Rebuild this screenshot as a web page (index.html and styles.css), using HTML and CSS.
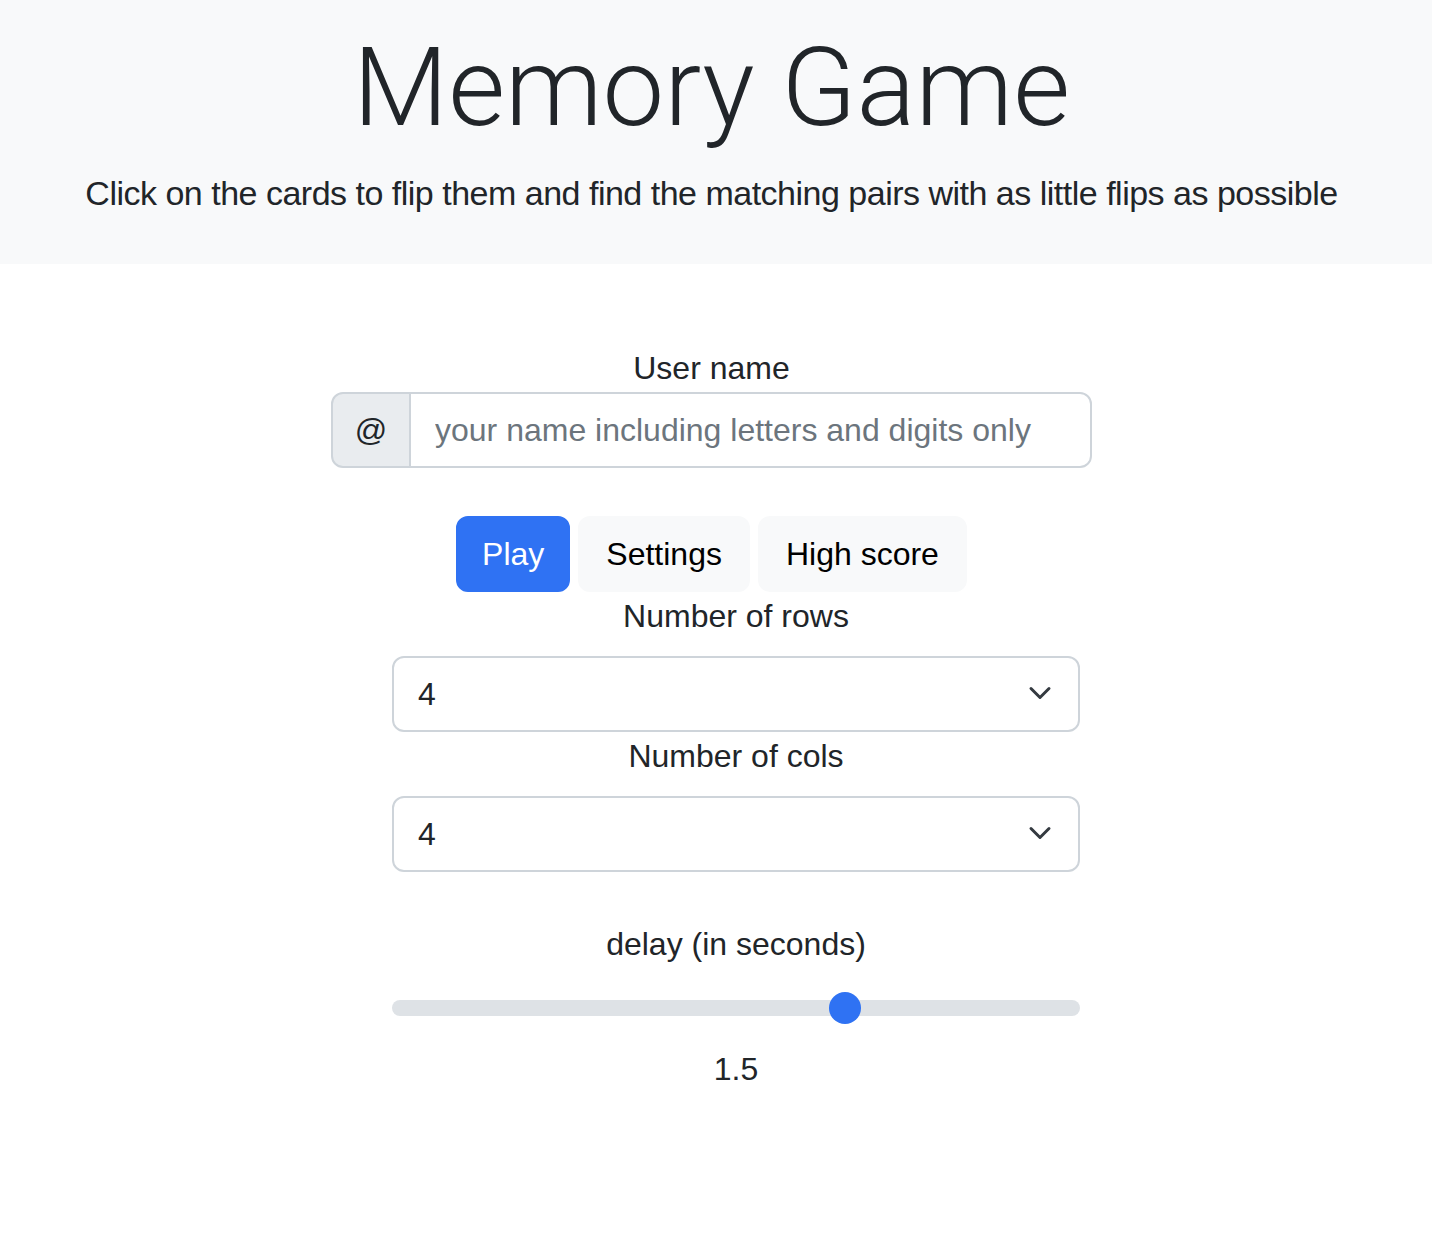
FILE: index.html
```html
<!DOCTYPE html>
<html lang="en">
<head>
<meta charset="utf-8">
<title>Memory Game</title>
<link rel="stylesheet" href="styles.css">
</head>
<body>
<header class="hero">
  <h1 class="hero-title">Memory Game</h1>
  <p class="hero-lead">Click on the cards to flip them and find the matching pairs with as little flips as possible</p>
</header>
<main class="main">
  <label class="field-label" for="username">User name</label>
  <div class="input-group">
    <span class="input-addon">@</span>
    <input id="username" class="text-input" type="text" placeholder="your name including letters and digits only">
  </div>
  <nav class="tabs">
    <button class="btn btn-primary" type="button">Play</button>
    <button class="btn btn-light" type="button">Settings</button>
    <button class="btn btn-light" type="button">High score</button>
  </nav>
  <section class="settings">
    <label class="field-label field-label-gap" for="rows">Number of rows</label>
    <div class="select-wrap">
      <select id="rows" class="select">
        <option>2</option>
        <option selected>4</option>
        <option>6</option>
      </select>
      <svg class="chevron" viewBox="0 0 16 16" aria-hidden="true"><path d="m2 5 6 6 6-6" fill="none" stroke="#343a40" stroke-width="2" stroke-linecap="round" stroke-linejoin="round"/></svg>
    </div>
    <label class="field-label field-label-gap" for="cols">Number of cols</label>
    <div class="select-wrap">
      <select id="cols" class="select">
        <option>2</option>
        <option selected>4</option>
        <option>6</option>
      </select>
      <svg class="chevron" viewBox="0 0 16 16" aria-hidden="true"><path d="m2 5 6 6 6-6" fill="none" stroke="#343a40" stroke-width="2" stroke-linecap="round" stroke-linejoin="round"/></svg>
    </div>
    <label class="field-label field-label-gap delay-label" for="delay">delay (in seconds)</label>
    <input id="delay" class="range" type="range" min="0.5" max="2" step="0.1" value="1.5">
    <p class="range-value">1.5</p>
  </section>
</main>
</body>
</html>
```
FILE: styles.css
```css
* { box-sizing: border-box; }
html, body { margin: 0; padding: 0; }
body {
  font-family: "Liberation Sans", Arial, sans-serif;
  font-size: 32px;
  line-height: 1.5;
  color: #212529;
  background: #fff;
}
.hero {
  background: #f8f9fa;
  height: 264px;
  padding: 22px 9px 0 0;
  text-align: center;
}
.hero-title {
  margin: 0;
  font-family: Roboto, "Liberation Sans", sans-serif;
  font-weight: 300;
  font-size: 110px;
  line-height: 1.2;
  color: #212529;
}
.hero-lead {
  margin: 14px 0 0;
  font-size: 34px;
  letter-spacing: -0.5px;
  line-height: 1.5;
  white-space: nowrap;
}
.main {
  display: flex;
  flex-direction: column;
  align-items: center;
  padding: 80px 9px 0 0;
}
.field-label {
  display: block;
  text-align: center;
  line-height: 48px;
}
.input-group {
  display: flex;
  width: 761px;
  height: 76px;
}
.input-addon {
  display: flex;
  align-items: center;
  justify-content: center;
  width: 80px;
  flex: none;
  background: #e9ecef;
  border: 2px solid #ced4da;
  border-radius: 12px 0 0 12px;
}
.text-input {
  flex: 1;
  min-width: 0;
  margin: 0 0 0 -2px;
  padding: 0 24px;
  font: inherit;
  color: #212529;
  border: 2px solid #ced4da;
  border-radius: 0 12px 12px 0;
  background: #fff;
  outline: none;
}
.text-input::placeholder { color: #6c757d; opacity: 1; }
.tabs {
  display: flex;
  gap: 8px;
  margin-top: 48px;
}
.btn {
  height: 76px;
  padding: 0 24px;
  font: inherit;
  border-radius: 12px;
  border: 2px solid transparent;
  cursor: pointer;
}
.btn-primary { background: #2f72f3; border-color: #2f72f3; color: #fff; }
.btn-light { background: #f8f9fa; border-color: #f8f9fa; color: #000; padding: 0 26px; }
.settings {
  display: flex;
  flex-direction: column;
  align-items: center;
  width: 688px;
  margin-left: 49px;
}
.field-label-gap { margin-bottom: 16px; }
.delay-label { margin-top: 48px; }
.select-wrap {
  position: relative;
  width: 688px;
}
.select {
  display: block;
  width: 100%;
  height: 76px;
  margin: 0;
  padding: 0 72px 0 24px;
  font: inherit;
  color: #212529;
  background: #fff;
  border: 2px solid #ced4da;
  border-radius: 12px;
  -webkit-appearance: none;
  appearance: none;
  outline: none;
}
.chevron {
  position: absolute;
  right: 28px;
  top: 25px;
  width: 24px;
  height: 24px;
  pointer-events: none;
}
.range {
  -webkit-appearance: none;
  appearance: none;
  display: block;
  width: 688px;
  height: 48px;
  margin: 0;
  padding: 0;
  background: transparent;
}
.range::-webkit-slider-runnable-track {
  height: 16px;
  background: #dee2e6;
  border-radius: 16px;
  border: 0;
}
.range::-webkit-slider-thumb {
  -webkit-appearance: none;
  appearance: none;
  width: 32px;
  height: 32px;
  margin-top: -8px;
  border: 0;
  border-radius: 50%;
  background: #2f72f3;
}
.range-value {
  margin: 13px 0 0;
  line-height: 48px;
}
```
